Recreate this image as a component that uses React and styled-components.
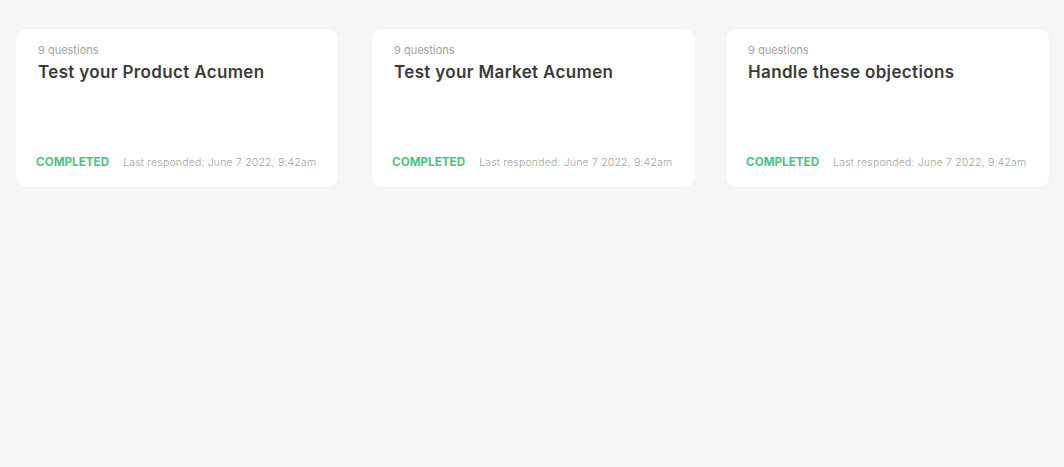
import React from "react";
import styled, { createGlobalStyle } from "styled-components";

const Global = createGlobalStyle`
  html, body { margin: 0; padding: 0; background: #f4f5f7; }
  body { font-family: "Inter", "Noto Sans", sans-serif; }
  * { box-sizing: border-box; }
`;

const Page = styled.div`
  width: 1064px;
  height: 467px;
  background: #f4f5f7;
  padding: 29px 15px 0 16px;
  display: grid;
  grid-template-columns: 356px 354px 323px;
  align-items: start;
`;

const Card = styled.div`
  width: ${(p) => p.$w}px;
  background: #ffffff;
  border-radius: 10px;
  height: 158px;
  padding: 14px 20px 18px 20px;
  display: flex;
  flex-direction: column;
  justify-content: space-between;
`;

const Header = styled.div`
  padding-left: 2px;
  display: flex;
  flex-direction: column;
  gap: 4px;
`;

const Count = styled.div`
  font-size: 11px;
  line-height: 14px;
  color: #a3a3a3;
`;

const Title = styled.div`
  font-size: 17px;
  line-height: 22px;
  font-weight: 600;
  letter-spacing: 0.35px;
  color: #3b3b3b;
`;

const Footer = styled.div`
  display: flex;
  align-items: center;
  gap: 14px;
`;

const Status = styled.span`
  font-size: 11.7px;
  font-weight: 700;
  color: #4cc383;
`;

const Meta = styled.span`
  font-size: 10.5px;
  font-weight: 300;
  letter-spacing: 0.18px;
  color: #a3a3a3;
`;

const items = [
  { t: "Test your Product Acumen", w: 322 },
  { t: "Test your Market Acumen", w: 323 },
  { t: "Handle these objections", w: 323 },
];

export default function App() {
  return (
    <>
      <Global />
      <Page>
        {items.map(({ t, w }) => (
          <Card key={t} $w={w}>
            <Header>
              <Count>9 questions</Count>
              <Title>{t}</Title>
            </Header>
            <Footer>
              <Status>COMPLETED</Status>
              <Meta>Last responded: June 7 2022, 9:42am</Meta>
            </Footer>
          </Card>
        ))}
      </Page>
    </>
  );
}
